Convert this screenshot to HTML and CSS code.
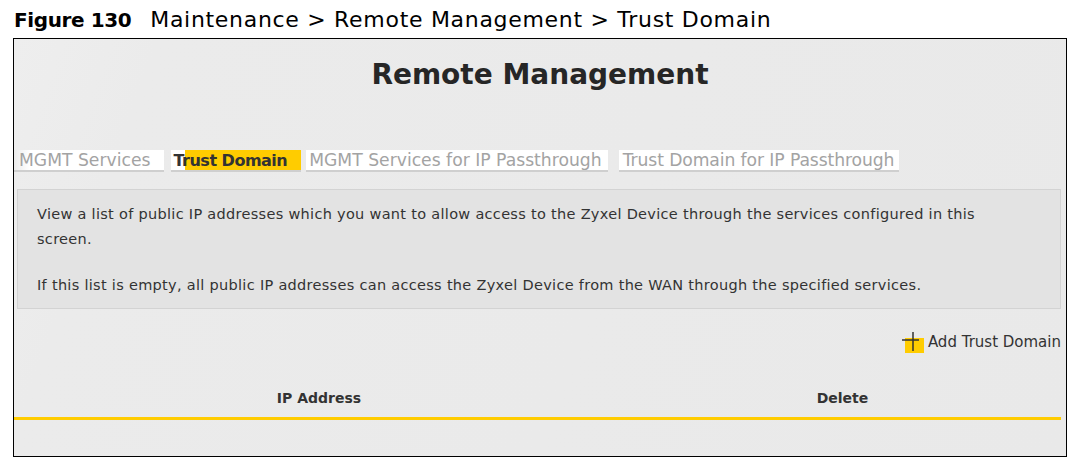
FILE: index.html
```html
<!DOCTYPE html>
<html>
<head>
<meta charset="utf-8">
<link rel="stylesheet" href="styles.css">
</head>
<body>
<div class="caption"><span class="fig">Figure 130</span><span class="path">Maintenance &gt; Remote Management &gt; Trust Domain</span></div>
<div class="frame">
  <h1 class="title">Remote Management</h1>
  <div class="tabs">
    <span class="tab tab-1">MGMT Services</span>
    <span class="tab tab-2 active">Trust Domain</span>
    <span class="tab tab-3">MGMT Services for IP Passthrough</span>
    <span class="tab tab-4">Trust Domain for IP Passthrough</span>
  </div>
  <div class="desc">
    <p>View a list of public IP addresses which you want to allow access to the Zyxel Device through the services configured in this screen.</p>
    <p>If this list is empty, all public IP addresses can access the Zyxel Device from the WAN through the specified services.</p>
  </div>
  <div class="actions">
    <span class="add"><svg class="plus" width="22" height="21" viewBox="0 0 22 21"><rect x="3" y="6" width="19" height="15" fill="#ffcc00"/><path d="M0 8H17M11 0V19" stroke="#333" stroke-width="1.5" fill="none"/></svg>Add Trust Domain</span>
  </div>
  <div class="thead">
    <div class="th th-ip">IP Address</div>
    <div class="th th-del">Delete</div>
  </div>
</div>
</body>
</html>
```
FILE: styles.css
```css
html, body { margin: 0; padding: 0; background: #fff; }
body { width: 1088px; height: 467px; overflow: hidden; font-family: "DejaVu Sans", "Liberation Sans", sans-serif; color: #333; }
.caption { padding: 8px 0 0 14px; height: 30px; box-sizing: border-box; line-height: 24px; color: #000; white-space: nowrap; }
.fig { font-weight: bold; font-size: 20px; letter-spacing: -0.4px; margin-right: 19px; }
.path { font-size: 22px; letter-spacing: 0.7px; }
.frame { margin: 8px 0 0 13px; width: 1054px; height: 419px; box-sizing: border-box; border: 1px solid #000;
  background: linear-gradient(110deg, #eeeeee 0%, #ebebeb 12%, #e9e9e9 100%); display: flex; flex-direction: column; }
.title { margin: 18px 0 0; text-align: center; font-size: 28px; line-height: 36px; font-weight: bold; color: #262626; }
.tabs { display: flex; margin: 57px 0 0 0; height: 22px; font-size: 17.2px; line-height: 20px; color: #a3a3a3; white-space: nowrap; }
.tab { background: #fff; border-bottom: 2px solid #cfcfcf; }
.tab-1 { background: linear-gradient(90deg, #ebebeb 0, #fff 16px); padding: 0 14px 0 5px; margin-right: 7px; }
.tab-2 { padding: 0 14px 0 2px; margin-right: 5px; }
.tab-3 { padding: 0 6px 0 3px; margin-right: 11px; }
.tab-4 { padding: 0 5px 0 4px; letter-spacing: -0.1px; }
.active { color: #333; font-weight: bold; font-size: 16px; letter-spacing: -0.5px; line-height: 20px; padding-top: 1px; height: 19px;
  background: linear-gradient(90deg, #fff 0, #fff 14px, #ffcc00 14px); }
.desc { margin: 17px 5px 0 3px; background: #e3e3e3; border: 1px solid #d3d3d3; padding: 12px 50px 10px 19px; font-size: 14.5px; letter-spacing: 0.3px; line-height: 25px; color: #333; }
.desc p { margin: 0 0 21px; }
.desc p:last-child { margin-bottom: 0; }
.actions { display: flex; justify-content: flex-end; margin: 23px 5px 0 0; font-size: 15px; line-height: 21px; }
.add { display: flex; align-items: center; }
.plus { display: block; margin-right: 4px; }
.thead { display: flex; margin: 37px 5px 0 0; height: 27px; border-bottom: 3px solid #ffcc00; font-size: 14px; font-weight: bold; color: #333; }
.th-ip { width: 610px; text-align: center; }
.th-del { flex: 1; text-align: center; }
```
